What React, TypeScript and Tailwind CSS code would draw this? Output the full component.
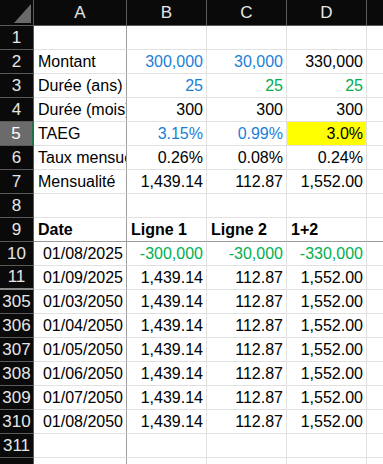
import React from "react";

type Cell = { t?: string; c?: string; bold?: boolean; align?: "l" | "r"; bg?: string };
type Row = { n: string; cells: Cell[]; hl?: boolean; freeze?: boolean; hidden?: boolean };

const BLUE = "text-[#1a7fd9]";
const GREEN = "text-[#00b050]";

const rows: Row[] = [
  { n: "1", cells: [{}, {}, {}, {}] },
  { n: "2", cells: [{ t: "Montant", align: "l" }, { t: "300,000", c: BLUE }, { t: "30,000", c: BLUE }, { t: "330,000" }] },
  { n: "3", cells: [{ t: "Durée (ans)", align: "l" }, { t: "25", c: BLUE }, { t: "25", c: GREEN }, { t: "25", c: GREEN }] },
  { n: "4", cells: [{ t: "Durée (mois)", align: "l" }, { t: "300" }, { t: "300" }, { t: "300" }] },
  { n: "5", hl: true, cells: [{ t: "TAEG", align: "l" }, { t: "3.15%", c: BLUE }, { t: "0.99%", c: BLUE }, { t: "3.0%", bg: "bg-[#ffff00]" }] },
  { n: "6", cells: [{ t: "Taux mensuel", align: "l" }, { t: "0.26%" }, { t: "0.08%" }, { t: "0.24%" }] },
  { n: "7", cells: [{ t: "Mensualité", align: "l" }, { t: "1,439.14" }, { t: "112.87" }, { t: "1,552.00" }] },
  { n: "8", cells: [{}, {}, {}, {}] },
  { n: "9", freeze: true, cells: [{ t: "Date", align: "l", bold: true }, { t: "Ligne 1", align: "l", bold: true }, { t: "Ligne 2", align: "l", bold: true }, { t: "1+2", align: "l", bold: true }] },
  { n: "10", cells: [{ t: "01/08/2025" }, { t: "-300,000", c: GREEN }, { t: "-30,000", c: GREEN }, { t: "-330,000", c: GREEN }] },
  { n: "11", hidden: true, cells: [{ t: "01/09/2025" }, { t: "1,439.14" }, { t: "112.87" }, { t: "1,552.00" }] },
  { n: "305", cells: [{ t: "01/03/2050" }, { t: "1,439.14" }, { t: "112.87" }, { t: "1,552.00" }] },
  { n: "306", cells: [{ t: "01/04/2050" }, { t: "1,439.14" }, { t: "112.87" }, { t: "1,552.00" }] },
  { n: "307", cells: [{ t: "01/05/2050" }, { t: "1,439.14" }, { t: "112.87" }, { t: "1,552.00" }] },
  { n: "308", cells: [{ t: "01/06/2050" }, { t: "1,439.14" }, { t: "112.87" }, { t: "1,552.00" }] },
  { n: "309", cells: [{ t: "01/07/2050" }, { t: "1,439.14" }, { t: "112.87" }, { t: "1,552.00" }] },
  { n: "310", cells: [{ t: "01/08/2050" }, { t: "1,439.14" }, { t: "112.87" }, { t: "1,552.00" }] },
  { n: "311", cells: [{}, {}, {}, {}] },
  { n: "", cells: [{}, {}, {}, {}] },
];

export default function App() {
  return (
    <div
      className="w-[383px] h-[464px] overflow-hidden bg-white text-[16px] text-black"
      style={{ fontFamily: "'Liberation Sans', Arial, sans-serif" }}
    >
      <div className="grid grid-cols-[34px_93px_80px_80px_80px_1fr]">
        {/* header row */}
        <div className="h-[26px] bg-[#0a0a0a] border-r border-b border-[#5a5a5a] relative">
          <svg className="absolute left-0 top-0" width="34" height="26" viewBox="0 0 34 26">
            <polygon points="14,23 31,23 31,4" fill="#6a6a6a" />
          </svg>
        </div>
        {["A", "B", "C", "D", ""].map((h, i) => (
          <div
            key={i}
            className={`h-[26px] bg-[#0a0a0a] border-b border-[#5a5a5a] flex items-center justify-center text-[#e6e6e6] text-[17px] ${i < 4 ? "border-r" : ""}`}
          >
            {h}
          </div>
        ))}

        {rows.map((r, idx) => {
          const bottom = r.freeze
            ? "border-b border-b-[#9a9a9a]"
            : "border-b border-b-[#e1e1e1]";
          return (
            <React.Fragment key={idx}>
              <div
                className={`h-[24px] flex items-center justify-center text-[17px] border-b ${
                  r.hl
                    ? "bg-[#6b6b6b] text-white border-r-2 border-r-[#1e7145] border-b-[#5a5a5a]"
                    : "bg-[#0a0a0a] text-[#e6e6e6] border-r border-r-[#5a5a5a] border-b-[#5a5a5a]"
                } ${r.hidden ? "border-b-2 border-b-[#8a8a8a]" : ""}`}
              >
                {r.n}
              </div>
              {r.cells.map((c, i) => (
                <div
                  key={i}
                  className={`h-[24px] overflow-hidden whitespace-nowrap flex items-center pt-[1px] ${bottom} ${
                    i === 0 ? "border-r border-r-[#a0a0a0]" : "border-r border-r-[#e1e1e1]"
                  } ${c.align === "l" ? "justify-start pl-[4px]" : "justify-end pr-[3px]"} ${c.c ?? ""} ${
                    c.bold ? "font-bold" : ""
                  } ${c.bg ?? ""}`}
                >
                  {c.t}
                </div>
              ))}
              <div className={`h-[24px] ${bottom}`} />
            </React.Fragment>
          );
        })}
      </div>
    </div>
  );
}
